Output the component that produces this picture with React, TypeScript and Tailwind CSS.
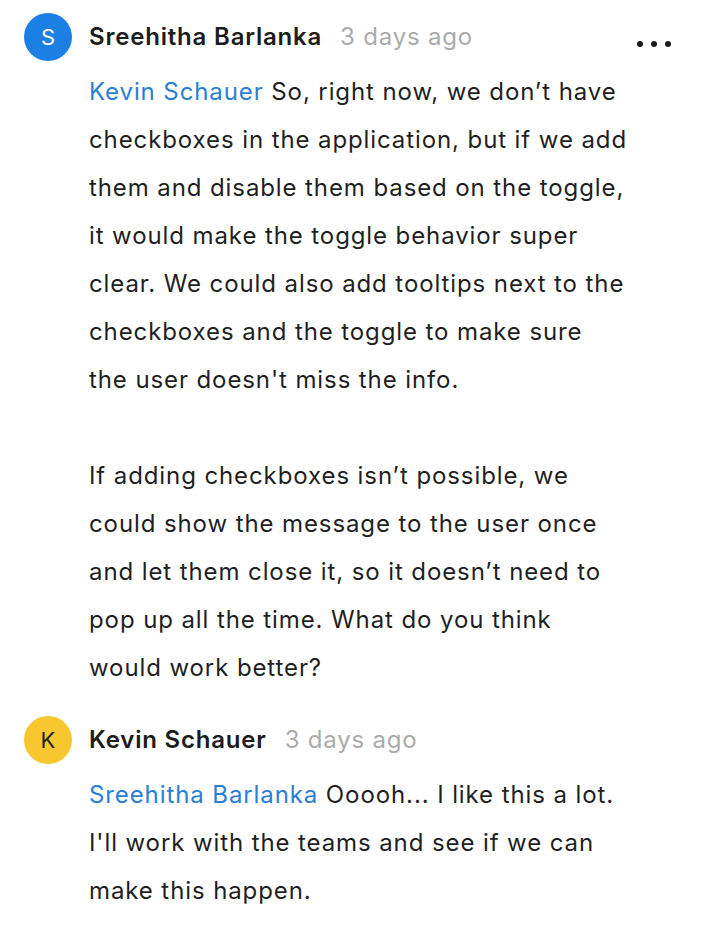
import React from "react";

type Comment = {
  initial: string;
  author: string;
  avatar: string;
  initialColor: string;
  time: string;
  mention: string;
  paragraphs: string[][];
  menu?: boolean;
};

// lines are broken where the original thread wraps them
const comments: Comment[] = [
  {
    initial: "S",
    author: "Sreehitha Barlanka",
    avatar: "bg-[#1b7fe3]",
    initialColor: "text-white",
    time: "3 days ago",
    mention: "Kevin Schauer",
    paragraphs: [
      [
        "So, right now, we don’t have",
        "checkboxes in the application, but if we add",
        "them and disable them based on the toggle,",
        "it would make the toggle behavior super",
        "clear. We could also add tooltips next to the",
        "checkboxes and the toggle to make sure",
        "the user doesn't miss the info.",
      ],
      [
        "If adding checkboxes isn’t possible, we",
        "could show the message to the user once",
        "and let them close it, so it doesn’t need to",
        "pop up all the time. What do you think",
        "would work better?",
      ],
    ],
    menu: true,
  },
  {
    initial: "K",
    author: "Kevin Schauer",
    avatar: "bg-[#f8c72f]",
    initialColor: "text-[#1f1f1f]",
    time: "3 days ago",
    mention: "Sreehitha Barlanka",
    paragraphs: [
      [
        "Ooooh... I like this a lot.",
        "I'll work with the teams and see if we can",
        "make this happen.",
      ],
    ],
  },
];

function CommentItem({ c }: { c: Comment }) {
  return (
    <div className="flex gap-[17px]">
      <div
        className={`w-12 h-12 shrink-0 rounded-full flex items-center justify-center text-[22px] ${c.avatar} ${c.initialColor}`}
      >
        {c.initial}
      </div>
      <div className="flex-1 flex flex-col gap-[7px]">
        <div className="h-12 flex items-center justify-between">
          <div className="flex items-baseline gap-[18px] tracking-[0.8px]">
            <span className="text-[24px] font-semibold text-[#1c1c1c]">{c.author}</span>
            <span className="text-[24px] text-[#ababab]">{c.time}</span>
          </div>
          {c.menu && (
            <div className="flex gap-[8px] mr-[31px] mt-[14px]">
              <span className="w-[6px] h-[6px] rounded-full bg-[#1c1c1c]" />
              <span className="w-[6px] h-[6px] rounded-full bg-[#1c1c1c]" />
              <span className="w-[6px] h-[6px] rounded-full bg-[#1c1c1c]" />
            </div>
          )}
        </div>
        <div className="text-[24px] leading-[48px] tracking-[0.9px] text-[#1f1f1f] flex flex-col gap-[48px]">
          {c.paragraphs.map((lines, i) => (
            <p key={i} className="whitespace-nowrap">
              {lines.map((line, j) => (
                <React.Fragment key={j}>
                  {i === 0 && j === 0 && <span className="text-[#2a7ed6]">{c.mention} </span>}
                  {line}
                  {j < lines.length - 1 && <br />}
                </React.Fragment>
              ))}
            </p>
          ))}
        </div>
      </div>
    </div>
  );
}

export default function App() {
  return (
    <div
      className="w-[702px] h-[928px] bg-white pl-6 pt-[13px] flex flex-col gap-6 overflow-hidden"
      style={{ fontFamily: "Inter, 'Noto Sans', sans-serif" }}
    >
      {comments.map((c) => (
        <CommentItem key={c.author} c={c} />
      ))}
    </div>
  );
}
